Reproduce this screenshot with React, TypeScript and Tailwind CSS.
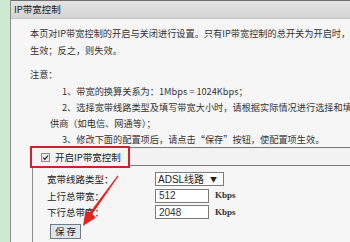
import React from "react";

const cn = "font-['Noto_Sans_CJK_SC',_'Noto_Sans',sans-serif]";

const FormRow = ({ label, children }: { label: string; children: React.ReactNode }) => (
  <div className="flex items-center h-[16.5px]">
    <div className="w-[108px] text-[9.5px] text-[#222]">{label}</div>
    {children}
  </div>
);

export default function App() {
  return (
    <div className={`relative w-[350px] h-[242px] overflow-hidden flex bg-[#cfe8d2] ${cn}`}>
      {/* green side strip */}
      <div className="w-[10px] shrink-0" />

      <div className="flex-1 flex flex-col border-l border-[#8c8c8c] bg-[#f6f6f6] min-w-0">
        {/* title bar */}
        <div className="h-[19px] shrink-0 flex items-center pl-[3px] border-t border-[#6f6f6f] border-b border-b-[#c4c4c4] bg-gradient-to-b from-[#e4e4e4] to-[#d4d4d4] text-[9.5px] text-[#1a1a1a] whitespace-nowrap">
          IP带宽控制
        </div>

        <div className="pl-[19px] text-[9.2px] text-[#333] whitespace-nowrap">
          <div className="mt-[6px] leading-[17px]">
            <div>本页对IP带宽控制的开启与关闭进行设置。只有IP带宽控制的总开关为开启时，</div>
            <div>生效；反之，则失效。</div>
          </div>

          <div className="mt-[7px] leading-[17px]">注意：</div>
          <div className="leading-[16px]">
            <div className="pl-[32px]">1、带宽的换算关系为：1Mbps = 1024Kbps；</div>
            <div className="pl-[32px]">2、选择宽带线路类型及填写带宽大小时，请根据实际情况进行选择和填</div>
            <div className="pl-[20px]">供商（如电信、网通等）；</div>
            <div className="pl-[32px]">3、修改下面的配置项后，请点击“保存”按钮，使配置项生效。</div>
          </div>

          {/* enable switch row */}
          <div className="h-[19px] border-y border-[#7a7a7a] bg-[#f2f2f2] flex">
            <div className="-mt-[2px] h-[22px] w-[100px] border-2 border-[#c9252c] flex items-center pl-[9px] gap-[5px] bg-[#f4f4f4]">
              <div className="w-[9px] h-[9px] border border-[#8d8d8d] bg-[#e9e9e9] flex items-center justify-center">
                <svg viewBox="0 0 10 10" className="w-[7px] h-[7px]">
                  <path d="M1.5 5.2 L4 7.6 L8.6 2.2" fill="none" stroke="#222" strokeWidth="1.8" />
                </svg>
              </div>
              <span className="text-[9.5px] text-[#222]">开启IP带宽控制</span>
            </div>
          </div>

          {/* settings block */}
          <div className="ml-[2px] border-l border-[#8a8a8a] pl-[14px] pt-[5px] h-[80px]">
            <FormRow label="宽带线路类型：">
              <div className="w-[69px] h-[14px] border border-[#7c7c7c] bg-white flex items-center justify-between pl-[2px] pr-[6px] text-[10px] text-[#222]">
                <span className="font-['Liberation_Sans',_'Noto_Sans_CJK_SC',sans-serif]">ADSL线路</span>
                <span className="text-[7px]">▼</span>
              </div>
            </FormRow>
            <FormRow label="上行总带宽：">
              <div className="w-[54px] h-[14px] border border-[#7c7c7c] bg-white flex items-center pl-[3px] text-[10px] text-[#333] font-['Liberation_Sans',sans-serif]">
                512
              </div>
              <span className="ml-[6px] text-[9px] font-bold text-[#333] font-['Liberation_Serif',serif]">Kbps</span>
            </FormRow>
            <FormRow label="下行总带宽：">
              <div className="w-[54px] h-[14px] border border-[#7c7c7c] bg-white flex items-center pl-[3px] text-[10px] text-[#333] font-['Liberation_Sans',sans-serif]">
                2048
              </div>
              <span className="ml-[6px] text-[9px] font-bold text-[#333] font-['Liberation_Serif',serif]">Kbps</span>
            </FormRow>
            <div className="mt-[3px] ml-[3px] w-[31px] h-[15px] border border-[#6e7b88] bg-[#dfe5ec] flex items-center justify-center text-[9.5px] text-[#222]">
              保 存
            </div>
          </div>
        </div>
      </div>

      {/* red annotation arrow */}
      <svg className="absolute inset-0 pointer-events-none" width="350" height="242" viewBox="0 0 350 242">
        <polygon
          points="117.6,175.5 118.5,176.3 92,214.5 96,217.6 83,226 85.5,210.5 89.6,212.8"
          fill="#e2231f"
        />
      </svg>
    </div>
  );
}
